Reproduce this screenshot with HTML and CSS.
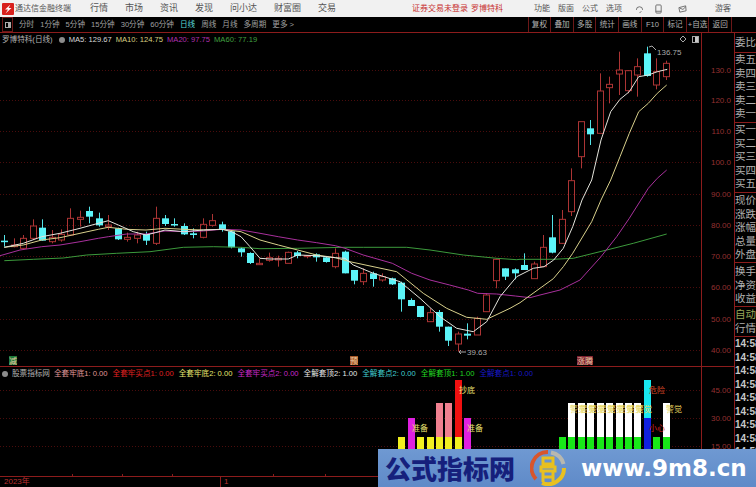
FILE: index.html
```html
<!DOCTYPE html>
<html lang="zh-CN">
<head>
  <meta charset="UTF-8"/>
  <title>通达信金融终端</title>
  <link rel="stylesheet" href="styles.css">
</head>
<body>
  <!-- TITLE BAR -->
  <div class="titlebar">
    <svg class="logo" viewBox="0 0 12 12"><rect width="12" height="12" rx="1" fill="#d8201c"/><path d="M8.500 1.500 3 6.500h3L3.500 10.500 9.500 5h-3z" fill="#fff"/></svg>
    <div class="app-name">通达信金融终端</div>
    <div class="menu">
      <span>行情</span><span>市场</span><span>资讯</span><span>发现</span><span>问小达</span><span>财富圈</span><span>交易</span>
    </div>
    <div class="login"><span>证券交易未登录</span><span>罗博特科</span></div>
    <div class="tools">
      <span>功能</span><span>版面</span><span>公式</span><span>选项</span>
    </div>
    <div class="tool-icons">
      <svg viewBox="0 0 10 10"><path d="M1.500 6a3.500 3.500 0 1 1 7 0M5 9.500 7 7.500" fill="none" stroke="#666"/></svg>
      <svg viewBox="0 0 10 10"><rect x="2" y=".5" width="6" height="9" rx="1" fill="none" stroke="#666"/><path d="M2 7.500h6" stroke="#666"/></svg>
      <svg viewBox="0 0 10 10"><path d="M1 3.500 8.500 1.500 9 7 2 8.500z" fill="none" stroke="#666"/><path d="M2 4l3.500 1.500L8.500 2.500" fill="none" stroke="#666"/></svg>
    </div>
    <div class="guest">游客</div>
  </div>

  <!-- PERIOD TOOLBAR -->
  <div class="toolbar">
    <div class="periods">
      <span class="layout-btn"><i></i></span>
      <span>分时</span><span>1分钟</span><span>5分钟</span><span>15分钟</span><span>30分钟</span><span>60分钟</span>
      <span class="active">日线</span><span>周线</span><span>月线</span><span>多周期</span><span>更多 &gt;</span>
    </div>
    <div class="actions">
      <span>复权</span><span>叠加</span><span>多股</span><span>统计</span><span>画线</span><span>F10</span><span>标记</span><span>+自选</span><span>返回</span>
    </div>
  </div>

  <div class="workspace">
    <div class="charts">
      <!-- K LINE -->
      <div class="pane pane-price">
        <svg id="price-chart" class="chart" viewBox="0 33 734 333"></svg>
        <div class="legend">
          <span class="stock-name">罗博特科(日线)</span>
          <i class="dot"></i>
          <span class="c-ma5">MA5: 129.67</span>
          <span class="c-ma10">MA10: 124.75</span>
          <span class="c-ma20">MA20: 97.75</span>
          <span class="c-ma60">MA60: 77.19</span>
        </div>
      </div>
      <!-- INDICATOR -->
      <div class="pane pane-indicator">
        <svg id="indicator-chart" class="chart" viewBox="0 367 734 109"></svg>
        <div class="legend legend-indicator">
          <i class="dot"></i>
          <span class="stock-name">股票指标网</span>
          <span class="c-salmon">全套牢底1: 0.00</span>
          <span class="c-red">全套牢买点1: 0.00</span>
          <span class="c-yellow">全套牢底2: 0.00</span>
          <span class="c-magenta">全套牢买点2: 0.00</span>
          <span class="c-white">全解套顶2: 1.00</span>
          <span class="c-cyan">全解套点2: 0.00</span>
          <span class="c-green">全解套顶1: 1.00</span>
          <span class="c-blue">全解套点1: 0.00</span>
        </div>
      </div>
      <div class="time-axis">
        <span class="year">2023年</span>
        <span class="month">1</span>
      </div>
    </div>

    <!-- QUOTE SIDE PANEL -->
    <div class="quotes">
      <div class="group g-ratio"><div>委比</div></div>
      <div class="group g-sell"><div>卖五</div><div>卖四</div><div>卖三</div><div>卖二</div><div>卖一</div></div>
      <div class="group g-buy"><div>买一</div><div>买二</div><div>买三</div><div>买四</div><div>买五</div></div>
      <div class="group g-price"><div>现价</div><div>涨跌</div><div>涨幅</div><div>总量</div><div>外盘</div></div>
      <div class="group g-turn"><div>换手</div><div>净资</div><div>收益</div></div>
      <div class="group g-auto"><div class="auto">自动</div><div>行情</div></div>
      <div class="ticks">
        <div>14:58</div><div>14:58</div><div>14:58</div><div>14:58</div><div>14:58</div><div>14:58</div>
        <div>14:58</div><div>14:58</div><div>14:58</div><div>14:58</div><div>14:58</div>
      </div>
    </div>
  </div>

  <!-- WATERMARK BANNER -->
  <div class="banner">
    <div class="banner-title">公式指标网</div>
    <svg class="banner-logo" viewBox="0 0 36 36">
      <path d="M18 2A16 16 0 0 0 6 29" fill="none" stroke="#d8552c" stroke-width="4"/>
      <path d="M34 18A16 16 0 0 1 12 33" fill="none" stroke="#e8c020" stroke-width="4"/>
      <path d="M21 2.500A16 16 0 0 1 33.500 14" fill="none" stroke="#b8b8b0" stroke-width="4"/>
      <path d="M13 8h10v6h-10zM11 17h14v4h-14zM13 21v11M23 21v11M13 27h10" fill="none" stroke="#e8c020" stroke-width="3"/>
    </svg>
    <div class="banner-url">www.9m8.cn</div>
  </div>

  <script src="script.js"></script>
</body>
</html>
```

FILE: styles.css
```css
* {
  box-sizing: border-box;
}
html, body {
  margin: 0;
  padding: 0;
}
body {
  position: relative;
  width: 756px;
  height: 487px;
  overflow: hidden;
  background: #000;
  font-family: "Liberation Sans", "Noto Sans CJK SC", sans-serif;
  font-size: 8px;
  line-height: 1;
  color: #b4b4b4;
}

/* TITLE BAR */
.titlebar {
  display: flex;
  align-items: center;
  height: 17px;
  padding-left: 2px;
  background: #f1f1f1;
  color: #555;
}
.logo {
  width: 12px;
  height: 12px;
  margin-right: 1px;
}
.app-name {
  width: 75px;
}
.menu {
  display: flex;
  gap: 17px;
  font-size: 9px;
}
.login {
  display: flex;
  gap: 3px;
  margin-left: 76px;
  color: #c83030;
}
.tools {
  display: flex;
  gap: 8px;
  margin-left: 31px;
}
.tool-icons {
  display: flex;
  gap: 10px;
  margin-left: 13px;
}
.tool-icons svg {
  width: 9px;
  height: 10px;
}
.tool-icons svg:last-child {
  margin-left: 5px;
}
.guest {
  margin-left: 28px;
}

/* TOOLBAR */
.toolbar {
  display: flex;
  justify-content: space-between;
  height: 16px;
  border-bottom: 1px solid #8c1c1c;
  padding-right: 24px;
  font-size: 7.600px;
}
.periods {
  display: flex;
  align-items: center;
  gap: 6px;
  padding-left: 2px;
  color: #a0a0a0;
}
.periods .active {
  color: #58d8d8;
}
.layout-btn {
  display: flex;
  align-items: center;
  justify-content: center;
  width: 11px;
  height: 15px;
  border: 1px solid #6c1818;
}
.layout-btn i {
  width: 6px;
  height: 6px;
  border: 1px solid #aaa;
  border-right-width: 3px;
}
.actions {
  display: flex;
  border-left: 1px solid #6c1818;
}
.actions span {
  display: flex;
  align-items: center;
  justify-content: center;
  width: 22.600px;
  border-right: 1px solid #6c1818;
}

/* CHARTS */
.workspace {
  display: flex;
  height: 454px;
}
.charts {
  width: 734px;
  flex: none;
}
.pane {
  position: relative;
  border-bottom: 1px solid #8c1c1c;
}
.pane-price {
  height: 334px;
}
.pane-indicator {
  height: 110px;
}
.chart {
  position: absolute;
  left: 0;
  top: 0;
  width: 734px;
  display: block;
}
.pane-price .chart {
  height: 333px;
}
.pane-indicator .chart {
  height: 109px;
}
.legend {
  position: relative;
  display: flex;
  align-items: center;
  gap: 4px;
  height: 13px;
  padding-left: 2px;
  font-size: 7.600px;
}
.legend-indicator {
  gap: 5px;
}
.dot {
  width: 6px;
  height: 6px;
  margin-left: 2px;
  border-radius: 50%;
  background: #8c8c8c;
}
.legend-indicator .dot {
  margin: 0 -1px 0 0;
}
.legend-indicator .stock-name {
  margin-right: -1px;
}
.c-ma5 { color: #d8d8d8; }
.c-ma10 { color: #d8d080; }
.c-ma20 { color: #b030b0; }
.c-ma60 { color: #40a040; }
.c-salmon { color: #e09a9a; }
.c-red { color: #e02020; }
.c-yellow { color: #e8e870; }
.c-magenta { color: #c828c8; }
.c-white { color: #e8e8e8; }
.c-cyan { color: #40d0d0; }
.c-green { color: #20d820; }
.c-blue { color: #1818c8; }

/* svg parts */
.grid {
  stroke: #4a0c0c;
  stroke-width: 1;
  stroke-dasharray: 1 2;
}
.axis-line {
  stroke: #8c1c1c;
  stroke-width: 1;
}
.wick-up, .body-up {
  stroke: #ac3434;
  fill: none;
}
.wick-down {
  stroke: #54e4e8;
}
.body-down {
  fill: #5cf4f8;
}
.ma {
  fill: none;
  stroke-width: 1;
  stroke-linejoin: round;
}
.ma5 { stroke: #e4e4dc; }
.ma10 { stroke: #d8d08c; }
.ma20 { stroke: #a8309c; }
.ma60 { stroke: #3c9a3c; }
.axis-text {
  font-size: 8px;
  fill: #943030;
  text-anchor: end;
}
.peak-text {
  font-size: 8px;
  fill: #a8a8a8;
}
.peak-line {
  stroke: #a8a8a8;
  fill: none;
}
.bar-text {
  font-size: 8px;
}
.tag-text {
  font-size: 8px;
  fill: #e8c8a0;
  text-anchor: middle;
}

.time-axis {
  display: flex;
  height: 10px;
  align-items: center;
  padding-left: 4px;
  color: #b83030;
}
.year {
  width: 216px;
}
.month {
  padding-left: 3px;
  border-left: 1px solid #8c1c1c;
  height: 10px;
  line-height: 10px;
}

/* QUOTE SIDE PANEL */
.quotes {
  width: 22px;
  flex: none;
  overflow: hidden;
  border-left: 1px solid #8c1c1c;
  font-size: 10.500px;
  color: #b0b0b0;
  white-space: nowrap;
}
.group {
  border-bottom: 1px solid #8c1c1c;
}
.group div {
  height: 13.500px;
  line-height: 13.500px;
}
.g-ratio {
  height: 20px;
  padding-top: 3px;
}
.g-sell {
  height: 70px;
}
.g-buy {
  height: 70px;
}
.g-price {
  height: 70px;
  padding-top: 1px;
}
.g-turn {
  height: 44px;
  padding-top: 2px;
}
.g-auto {
  height: 30px;
  padding-top: 1px;
}
.auto {
  color: #98a858;
}
.ticks {
  font-size: 10px;
  font-weight: 700;
  color: #c8c8c8;
}
.ticks div {
  height: 13.500px;
  line-height: 13.500px;
}

/* WATERMARK BANNER */
.banner {
  position: absolute;
  left: 378px;
  top: 449px;
  width: 378px;
  height: 38px;
  display: flex;
  align-items: center;
  background: linear-gradient(#6f99d2, #5f8ac8);
}
.banner-title {
  width: 152px;
  padding-left: 7px;
  font-family: "Noto Sans CJK SC", sans-serif;
  font-size: 26px;
  font-weight: 900;
  color: #16207c;
  white-space: nowrap;
}
.banner-logo {
  width: 36px;
  height: 36px;
}
.banner-url {
  margin-left: 15px;
  font-family: "DejaVu Sans", sans-serif;
  font-size: 23px;
  font-weight: 700;
  color: #fff;
  white-space: nowrap;
}
```

FILE: script.js
```js
const NS = "http://www.w3.org/2000/svg";
const barX = i => Math.round(4.33 + 9.45 * i);

function add(svg, tag, attrs, text) {
  const el = document.createElementNS(NS, tag);
  for (const k in attrs) el.setAttribute(k, attrs[k]);
  if (text) el.textContent = text;
  svg.appendChild(el);
  return el;
}

// candles read off the picture: [up, wickTop, bodyTop, bodyBottom, wickBottom], 3x px
const section = (y0, rows) => rows.map(r => [r[0], y0 + r[1] / 3, y0 + r[2] / 3, y0 + r[3] / 3, y0 + r[4] / 3]);
const candles = [
  ...section(190, [
    [0,135,152,155,170],[1,145,165,170,172],[1,135,145,175,178],[1,88,108,145,150],[0,88,113,152,152],
    [1,120,142,155,160],[1,118,133,150,155],[1,55,85,135,135],[1,62,82,88,110],[0,50,63,80,100],
    [0,68,85,106,110],[1,75,105,110,120],[0,113,115,148,150],[1,128,142,148,155],[1,125,135,145,160],
    [0,125,132,152,165],[1,50,85,160,165],[0,75,85,102,108],[0,85,102,106,110],[0,100,108,133,135],
    [0,115,130,135,145],[1,85,103,142,145],[1,72,92,106,110],[0,95,103,120,125],[0,122,124,172,175],
    [0,172,175,187,200],[0,187,189,219,222],[1,205,220,224,225],[1,188,203,211,215],[1,197,205,210,230],
    [1,185,187,220,220],[0,183,187,198,205],[1,195,197,200,205],[0,190,193,202,215],[0,200,202,216,218]
  ]),
  ...section(230, [
    [1,55,70,110,115],[0,62,65,130,130],[0,120,120,152,163],[1,115,130,155,165],[0,125,130,147,170],
    [1,130,140,150,155],[0,143,145,163,165],[0,155,158,208,245],[0,205,210,228,228],[0,228,228,261,262],
    [1,235,248,275,275],[0,240,246,290,305],[0,290,290,332,348],[1,305,312,342,365],[0,280,311,317,328],
    [1,260,265,315,315],[1,190,195,245,245],[1,85,88,152,175],[0,115,115,140,150],[0,115,118,130,148]
  ]),
  ...section(40, [
    [0,640,675,690,690],[1,665,672,716,716],[1,585,622,680,680],[0,525,592,638,640],[1,510,538,610,612],
    [1,385,422,515,528],[1,245,245,350,385],[0,240,265,283,315],[1,100,153,280,280],[1,110,133,143,190],
    [1,35,90,102,165],[1,90,92,152,160],[1,55,80,105,170],[0,20,40,108,110],[1,55,95,135,148],[1,62,70,110,120]
  ])
];

// moving averages, same 3x readings per crop
const pts = (x0, y0, list) => list.map(p => (x0 + p[0] / 3).toFixed(1) + "," + (y0 + p[1] / 3).toFixed(1));
const maLines = {
  ma60: [
    ...pts(0, 190, [[13,212],[100,208],[190,204],[260,195],[350,190],[450,185],[550,172],[640,170],[723,172],[780,176],[893,175],[1035,172]]),
    ...pts(330, 230, [[100,52],[230,52],[300,60],[400,75],[500,85],[560,89]]),
    ...pts(520, 40, [[0,658],[100,658],[160,655],[260,630],[340,610],[440,582]])
  ],
  ma20: [
    ...pts(0, 190, [[0,197],[60,180],[125,170],[180,165],[240,155],[295,145],[325,140],[380,132],[438,132],[495,123],[552,125],[610,123],[666,118],[723,120],[780,130],[835,140],[893,150],[950,158],[1006,167],[1035,175]]),
    ...pts(330, 230, [[45,55],[100,75],[187,100],[245,130],[300,150],[359,165],[415,180],[443,190],[500,192],[556,198],[600,203]]),
    ...pts(520, 40, [[60,765],[120,750],[180,720],[243,650],[290,590],[328,535],[385,445],[412,415],[440,390]])
  ],
  ma10: [
    ...pts(0, 190, [[13,172],[70,165],[125,150],[180,143],[240,130],[295,118],[325,112],[380,118],[438,120],[495,115],[552,118],[610,120],[666,118],[723,125],[780,150],[835,165],[893,180],[950,195],[1006,203]]),
    ...pts(330, 230, [[60,95],[200,125],[280,190],[350,235],[410,262],[470,268],[540,235],[570,218]]),
    ...pts(520, 40, [[100,716],[130,680],[158,640],[215,545],[243,480],[272,420],[300,350],[328,280],[356,215],[385,190],[412,160],[440,135]])
  ],
  ma5: [
    ...pts(0, 190, [[13,172],[70,160],[125,140],[180,130],[240,115],[295,100],[325,92],[355,105],[400,125],[438,135],[466,128],[495,120],[552,125],[610,120],[666,118],[695,125],[723,140],[750,170],[780,205],[810,207],[865,207],[893,195],[950,197],[1006,203]]),
    ...pts(330, 230, [[45,85],[70,105],[130,130],[210,155],[270,205],[330,260],[380,295],[430,305],[470,275],[510,200],[560,140]]),
    ...pts(520, 40, [[40,685],[72,680],[101,660],[130,625],[158,560],[186,480],[215,420],[243,300],[272,215],[300,178],[328,155],[356,110],[385,105],[412,95],[442,88]])
  ]
};

function drawPrice() {
  const svg = document.getElementById("price-chart");
  const labels = ["130.0","120.0","110.0","100.0","90.00","80.00","70.00","60.00","50.00","40.00"];
  const rows = [70,100,131,162,194,225,256,287,319,350];
  rows.forEach((y, i) => {
    add(svg, "line", {class: "grid", x1: 0, x2: 701, y1: y + .5, y2: y + .5});
    add(svg, "text", {class: "axis-text", x: 731, y: y + 3}, labels[i]);
  });
  add(svg, "line", {class: "axis-line", x1: 701.5, x2: 701.5, y1: 33, y2: 366});
  candles.forEach((c, i) => {
    const x = barX(i);
    const [up, wt, bt, bb, wb] = c;
    if (up) {
      add(svg, "path", {class: "wick-up", d: `M${x + .5} ${wt}V${bt}M${x + .5} ${bb}V${wb}`});
      add(svg, "rect", {class: "body-up", x: x - 2.5, y: bt, width: 6, height: Math.max(bb - bt, 1)});
    } else {
      add(svg, "path", {class: "wick-down", d: `M${x + .5} ${wt}V${wb}`});
      add(svg, "rect", {class: "body-down", x: x - 3, y: bt, width: 7, height: Math.max(bb - bt, 1.5)});
    }
  });
  for (const name of ["ma60", "ma20", "ma10", "ma5"]) {
    add(svg, "polyline", {class: "ma " + name, points: maLines[name].join(" ")});
  }
  // high / low
  add(svg, "path", {class: "peak-line", d: "M649 47l3 -1 4 4"});
  add(svg, "text", {class: "peak-text", x: 657, y: 54.5}, "136.75");
  add(svg, "path", {class: "peak-line", d: "M459 352h7M459 352l2 -2M459 352l2 2"});
  add(svg, "text", {class: "peak-text", x: 467, y: 355}, "39.63");
  // top right widgets
  add(svg, "path", {class: "peak-line", d: "M683 36l3 3 -3 3 -3 -3z"});
  add(svg, "rect", {class: "peak-line", x: 692.5, y: 36.5, width: 6, height: 6});
  add(svg, "rect", {x: 695, y: 37, width: 3, height: 5, fill: "#c8c8c8"});
  // signal tags
  add(svg, "rect", {x: 9, y: 356, width: 8, height: 9, fill: "#1f7a3a"});
  add(svg, "text", {class: "tag-text", x: 13, y: 363.500}, "减");
  add(svg, "rect", {x: 350, y: 356, width: 8, height: 9, fill: "#a85a28"});
  add(svg, "text", {class: "tag-text", x: 354, y: 363.500}, "预");
  add(svg, "rect", {x: 577, y: 356, width: 16, height: 9, fill: "#7c2030"});
  add(svg, "text", {class: "tag-text", x: 585, y: 363.500}, "涨腾");
}

function drawIndicator() {
  const svg = document.getElementById("indicator-chart");
  [[390,"45.00"],[418,"30.00"],[446,"15.00"]].forEach(([y, label]) => {
    add(svg, "line", {class: "grid", x1: 0, x2: 701, y1: y + .5, y2: y + .5});
    add(svg, "text", {class: "axis-text", x: 731, y: y + 3}, label);
  });
  add(svg, "line", {class: "axis-line", x1: 701.5, x2: 701.5, y1: 367, y2: 476});
  // small date ticks above the time axis
  [72, 122, 172, 273, 325].forEach(x => add(svg, "line", {class: "axis-line", x1: x + .5, x2: x + .5, y1: 474, y2: 476}));

  // [bar index, [top, colour] per stacked block], all run down to the axis
  const Y = "#f0f020", G = "#18e818", W = "#fff", M = "#e020e0", P = "#f08090";
  const bars = [
    [42, [437, Y]], [43, [418, M]], [44, [437, Y]], [45, [437, Y]],
    [46, [403, P], [437, Y]], [47, [403, P], [437, Y]], [48, [380, "#f01010"], [437, Y]], [49, [418, M]],
    [59, [437, G]],
    [68, [380, "#18e8f0"], [418, "#1020e0"]], [69, [437, G]], [70, [403, W], [437, G]]
  ];
  for (let i = 60; i <= 67; i++) bars.push([i, [403, W], [437, G]]);
  bars.forEach(([i, ...blocks]) => {
    blocks.forEach(([top, color], n) => {
      const next = blocks[n + 1] ? blocks[n + 1][0] : 476;
      add(svg, "rect", {x: barX(i) - 3, y: top, width: 7, height: next - top, fill: color});
    });
  });

  const word = (x, y, text, color) => add(svg, "text", {class: "bar-text", x, y, fill: color}, text);
  word(412, 431, "准备", "#e8e070");
  word(459, 393, "抄底", "#e8e070");
  word(467, 431, "准备", "#e8e070");
  for (let i = 60; i <= 67; i++) word(barX(i) - 1, 412, "警觉", "#e8d860");
  word(666, 412, "警觉", "#e8d860");
  word(649, 393, "危险", "#d84828");
  word(649, 431, "小心", "#d82020");
}

drawPrice();
drawIndicator();
```
